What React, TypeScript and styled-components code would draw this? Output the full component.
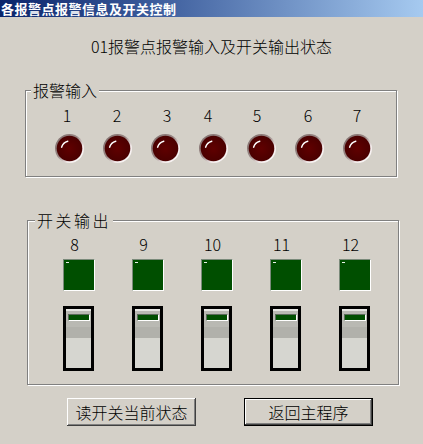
import React, { useId } from "react";
import styled, { createGlobalStyle, css } from "styled-components";

const Global = createGlobalStyle`
  html, body {
    margin: 0;
    padding: 0;
    background: #d4d0c8;
  }
  body {
    font-family: "Noto Sans CJK SC", "Liberation Sans", sans-serif;
    color: #000;
  }
  * { box-sizing: border-box; }
`;

const Window = styled.div`
  width: 423px;
  height: 444px;
  overflow: hidden;
  background: #d4d0c8;
  display: flex;
  flex-direction: column;
`;

const TitleBar = styled.div`
  height: 17px;
  flex: none;
  background: linear-gradient(to right, #0a246a 0%, #3a5a9a 35%, #a6caf0 100%);
  color: #fff;
  font-weight: 700;
  font-size: 13px;
  letter-spacing: 0.5px;
  line-height: 17px;
  padding-left: 1px;
  white-space: nowrap;
`;

const Heading = styled.div`
  margin-top: 19px;
  height: 20px;
  line-height: 20px;
  font-size: 16px;
  font-weight: 300;
  text-align: center;
  white-space: nowrap;
`;

const GroupBox = styled.div<{ $left: number; $width: number; $height: number; $top: number; $padTop: number }>`
  position: relative;
  flex: none;
  margin-left: ${(p) => p.$left}px;
  margin-top: ${(p) => p.$top}px;
  width: ${(p) => p.$width}px;
  height: ${(p) => p.$height}px;
  border: 1px solid #808080;
  box-shadow: inset 1px 1px 0 #ffffff, 1px 1px 0 #ffffff;
  padding-top: ${(p) => p.$padTop}px;
`;

const Legend = styled.span<{ $left: number; $spacing: number }>`
  position: absolute;
  top: -10px;
  left: ${(p) => p.$left}px;
  padding: 0 2px;
  background: #d4d0c8;
  font-size: 16px;
  font-weight: 300;
  line-height: 18px;
  letter-spacing: ${(p) => p.$spacing}px;
  white-space: nowrap;
`;

const LedGrid = styled.div`
  display: grid;
  grid-template-columns: repeat(7, 48px);
  padding-left: 19px;
`;

const LedCell = styled.div`
  display: flex;
  flex-direction: column;
  align-items: center;
`;

const Num = styled.div<{ $shift: number }>`
  height: 16px;
  line-height: 16px;
  font-size: 16px;
  font-family: "Noto Sans CJK SC", "DejaVu Sans", sans-serif;
  font-weight: 300;
  transform: translateX(${(p) => p.$shift}px);
`;

const LedWrap = styled.div`
  margin-top: 10px;
  width: 31px;
  height: 31px;
  svg { display: block; }
`;

const OutGrid = styled.div`
  display: grid;
  grid-template-columns: repeat(5, 69px);
  padding-left: 16px;
`;

const OutCell = styled.div`
  display: flex;
  flex-direction: column;
  align-items: center;
`;

const Lamp = styled.div`
  position: relative;
  margin-top: 7px;
  width: 32px;
  height: 32px;
  background: #004f00;
  border-top: 1px solid #7a8a7a;
  border-left: 1px solid #7a8a7a;
  border-right: 1px solid #ffffff;
  border-bottom: 1px solid #ffffff;
  &::after {
    content: "";
    position: absolute;
    left: 2px;
    top: 2px;
    width: 3px;
    height: 1px;
    background: #e8f0e8;
  }
`;

const Switch = styled.div`
  margin-top: 15px;
  width: 31px;
  height: 65px;
  border: 3px solid #000;
  display: flex;
  flex-direction: column;
  align-items: center;
  padding-top: 5px;
  background: linear-gradient(
    to bottom,
    #e6e6e2 0px,
    #e6e6e2 2px,
    #b9b9b3 2px,
    #b9b9b3 18px,
    #b1b1ab 18px,
    #b1b1ab 29px,
    #d6d6d0 29px,
    #d6d6d0 100%
  );
`;

const SwitchBar = styled.div`
  width: 22px;
  height: 7px;
  background: #004f00;
  border-top: 1px solid #5a6a5a;
  border-left: 1px solid #5a6a5a;
  border-right: 1px solid #ffffff;
  border-bottom: 1px solid #ffffff;
`;

const ButtonRow = styled.div`
  display: flex;
  gap: 48px;
  padding-left: 67px;
  margin-top: 13px;
`;

const Button = styled.button<{ $default?: boolean }>`
  width: 129px;
  height: 28px;
  padding: 0;
  margin: 0;
  background: #d4d0c8;
  font-family: "Noto Sans CJK SC", sans-serif;
  font-size: 16px;
  font-weight: 300;
  line-height: 26px;
  color: #000;
  border: none;
  box-shadow: inset -1px -1px 0 #404040, inset 1px 1px 0 #ffffff, inset -2px -2px 0 #808080;
  ${(p) =>
    p.$default &&
    css`
      border: 1px solid #000;
    `}
`;

function Led() {
  const id = useId().replace(/:/g, "");
  return (
    <svg width="31" height="31" viewBox="0 0 31 31">
      <defs>
        <linearGradient id={`ring${id}`} x1="0" y1="0" x2="1" y2="1">
          <stop offset="0" stopColor="#7c6a68" />
          <stop offset="0.45" stopColor="#9a8886" />
          <stop offset="0.7" stopColor="#f4ecec" />
          <stop offset="1" stopColor="#ffffff" />
        </linearGradient>
        <radialGradient id={`body${id}`} cx="0.5" cy="0.5" r="0.5">
          <stop offset="0" stopColor="#600000" />
          <stop offset="1" stopColor="#4a0000" />
        </radialGradient>
      </defs>
      <circle cx="15.5" cy="15.5" r="14.5" fill={`url(#ring${id})`} />
      <circle cx="15.5" cy="15.5" r="12.8" fill={`url(#body${id})`} />
      <path d="M7.6 14.2 A8.5 8.5 0 0 1 13.8 8.2" fill="none" stroke="#ffffff" strokeWidth="1.4" strokeLinecap="round" />
    </svg>
  );
}

const leds = [
  { n: 1, shift: -2 },
  { n: 2, shift: 0 },
  { n: 3, shift: 2 },
  { n: 4, shift: -5 },
  { n: 5, shift: -4 },
  { n: 6, shift: -1 },
  { n: 7, shift: 0 },
];

const outputs = [8, 9, 10, 11, 12];

export default function App() {
  return (
    <>
      <Global />
      <Window>
        <TitleBar>各报警点报警信息及开关控制</TitleBar>
        <Heading>01报警点报警输入及开关输出状态</Heading>
        <GroupBox $left={25} $width={372} $height={87} $top={34} $padTop={16}>
          <Legend $left={5} $spacing={0}>报警输入</Legend>
          <LedGrid>
            {leds.map((l) => (
              <LedCell key={l.n}>
                <Num $shift={l.shift}>{l.n}</Num>
                <LedWrap>
                  <Led />
                </LedWrap>
              </LedCell>
            ))}
          </LedGrid>
        </GroupBox>
        <GroupBox $left={27} $width={372} $height={165} $top={43} $padTop={15}>
          <Legend $left={7} $spacing={2.5}>开关输出</Legend>
          <OutGrid>
            {outputs.map((n) => (
              <OutCell key={n}>
                <Num $shift={-4}>{n}</Num>
                <Lamp />
                <Switch>
                  <SwitchBar />
                </Switch>
              </OutCell>
            ))}
          </OutGrid>
        </GroupBox>
        <ButtonRow>
          <Button>读开关当前状态</Button>
          <Button $default>返回主程序</Button>
        </ButtonRow>
      </Window>
    </>
  );
}
